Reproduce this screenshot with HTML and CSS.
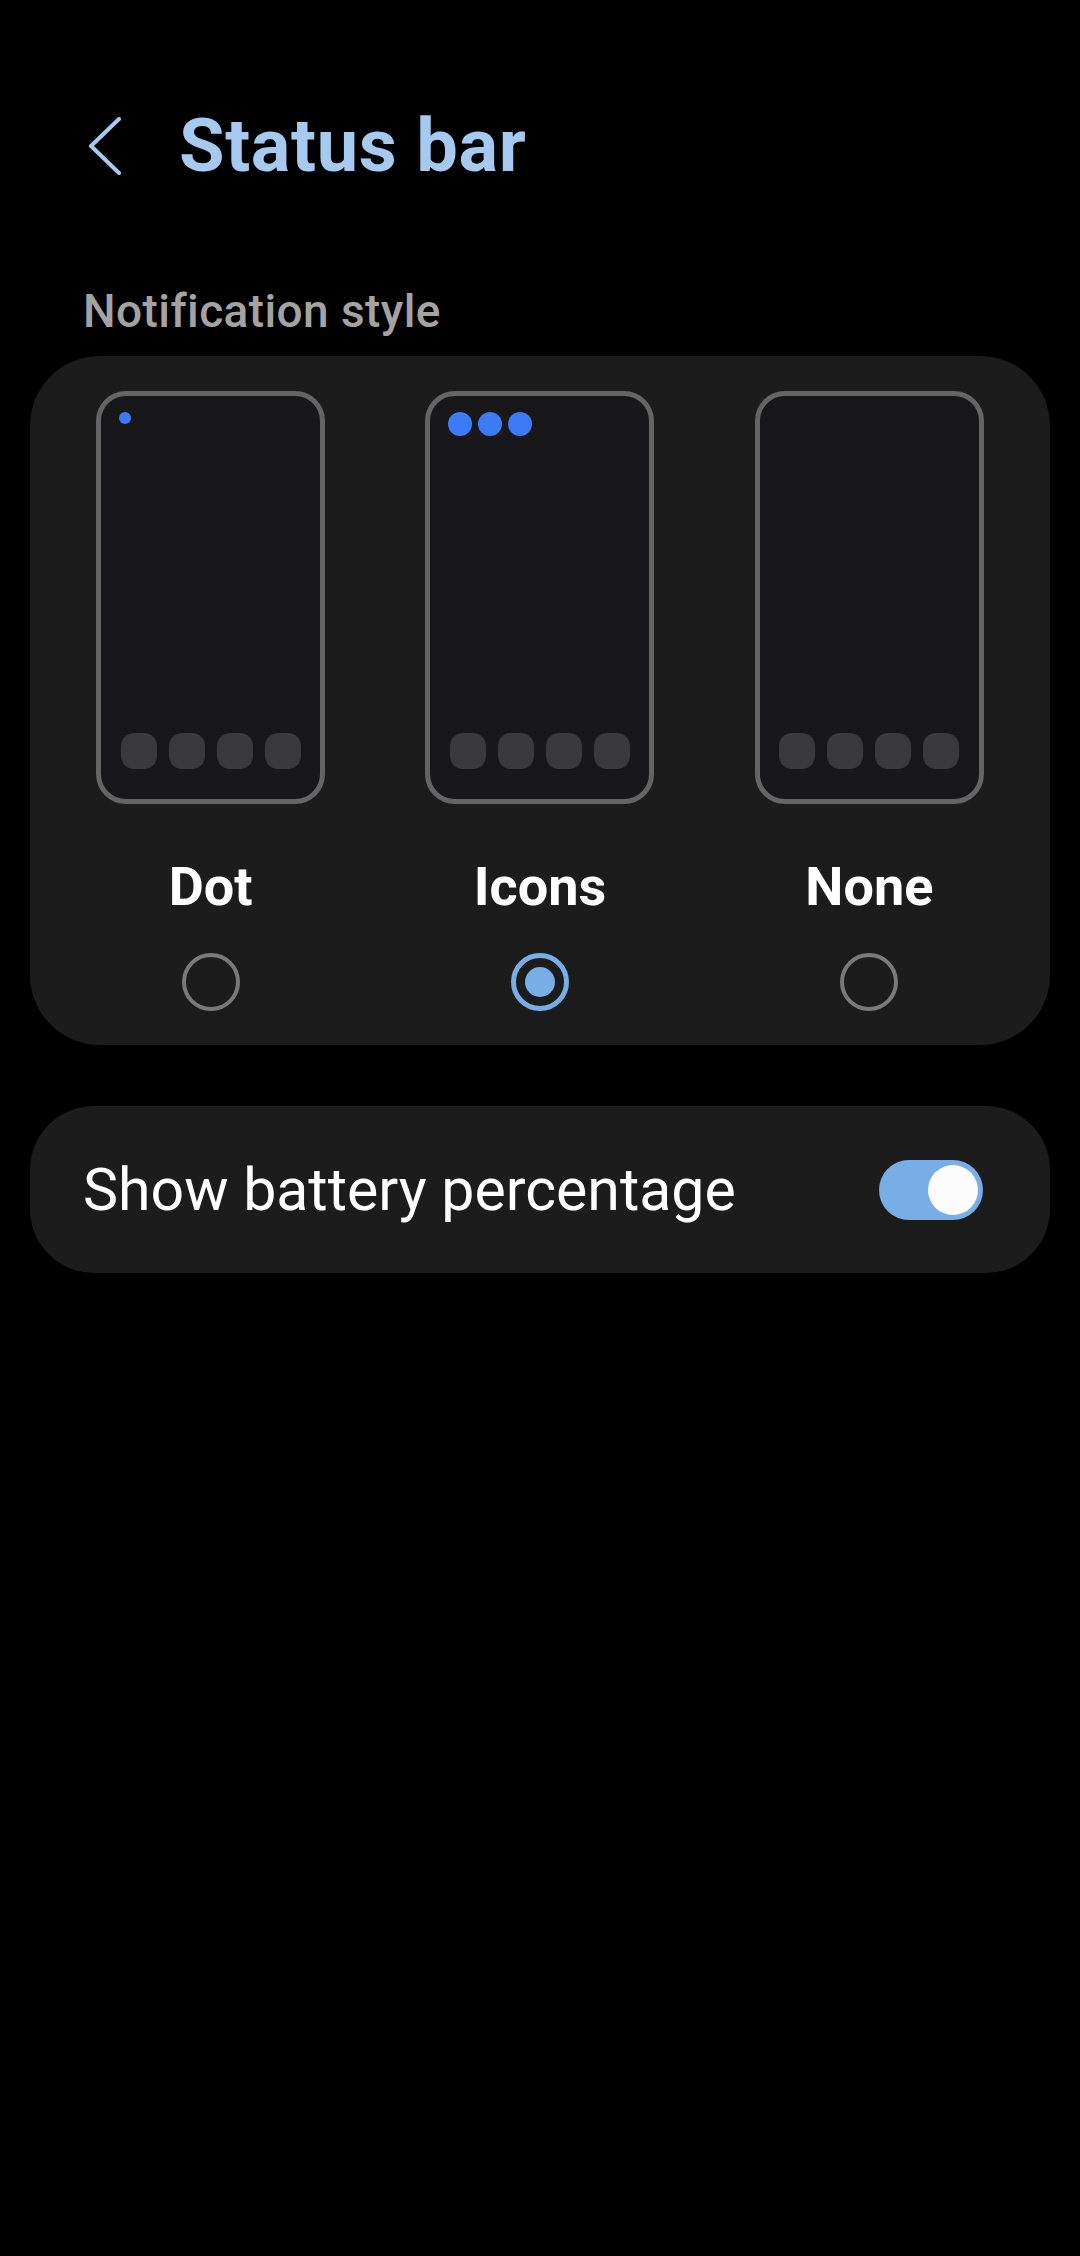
FILE: index.html
```html
<!DOCTYPE html>
<html lang="en">
<head>
    <meta charset="UTF-8">
    <meta name="viewport" content="width=device-width, initial-scale=1.0">
    <title>Status bar</title>
    <link rel="stylesheet" href="styles.css">
</head>
<body>

<!-- Header -->
<div class="header">
    <svg class="back" width="34" height="58" viewBox="0 0 34 58">
        <path d="M31 2 L3 29 L31 56" fill="none" stroke="#a6c9ef" stroke-width="4" stroke-linecap="round" stroke-linejoin="round"/>
    </svg>
    <h1 class="title">Status bar</h1>
</div>

<h2 class="section-label">Notification style</h2>

<!-- Notification style picker -->
<div class="card style-card">
    <div class="option">
        <div class="phone">
            <div class="status-row">
                <span class="dot small"></span>
            </div>
            <div class="dock">
                <span class="app"></span><span class="app"></span><span class="app"></span><span class="app"></span>
            </div>
        </div>
        <div class="option-name">Dot</div>
        <div class="radio"></div>
    </div>
    <div class="option">
        <div class="phone">
            <div class="status-row">
                <span class="dot"></span><span class="dot"></span><span class="dot"></span>
            </div>
            <div class="dock">
                <span class="app"></span><span class="app"></span><span class="app"></span><span class="app"></span>
            </div>
        </div>
        <div class="option-name">Icons</div>
        <div class="radio checked"><span class="radio-fill"></span></div>
    </div>
    <div class="option">
        <div class="phone">
            <div class="status-row"></div>
            <div class="dock">
                <span class="app"></span><span class="app"></span><span class="app"></span><span class="app"></span>
            </div>
        </div>
        <div class="option-name">None</div>
        <div class="radio"></div>
    </div>
</div>

<!-- Battery percentage -->
<div class="card switch-row">
    <span class="switch-label">Show battery percentage</span>
    <div class="toggle on"><span class="thumb"></span></div>
</div>

</body>
</html>
```

FILE: styles.css
```css
body {
    margin: 0;
    background-color: #000;
    font-family: Roboto, "Liberation Sans", sans-serif;
    color: #fff;
    width: 1080px;
}
.header {
    display: flex;
    align-items: center;
    height: 84px;
    padding: 104px 0 0 88px;
}
.back {
    display: block;
}
.title {
    margin: 0 0 0 57px;
    font-size: 74px;
    line-height: 84px;
    font-weight: 700;
    letter-spacing: 0.6px;
    color: #a6c9ef;
}
.section-label {
    margin: 96px 0 0 83px;
    font-size: 46px;
    line-height: 54px;
    font-weight: 500;
    letter-spacing: 0.4px;
    color: #a3a3a3;
}
.card {
    background-color: #1c1c1c;
    margin: 0 30px;
}
.style-card {
    margin-top: 18px;
    border-radius: 70px;
    padding: 35px 16px 34px;
    display: grid;
    grid-template-columns: repeat(3, 1fr);
}
.option {
    display: flex;
    flex-direction: column;
    align-items: center;
}
.phone {
    box-sizing: border-box;
    width: 229px;
    height: 413px;
    border: 5px solid #656565;
    border-radius: 30px;
    background-color: #18181a;
    padding: 16px 18px 30px;
    display: flex;
    flex-direction: column;
    justify-content: space-between;
}
.status-row {
    display: flex;
    gap: 6px;
    height: 24px;
}
.dot {
    width: 24px;
    height: 24px;
    border-radius: 50%;
    background-color: #3b7cf6;
}
.dot.small {
    width: 12px;
    height: 12px;
}
.dock {
    display: flex;
    justify-content: center;
    gap: 12px;
}
.app {
    width: 36px;
    height: 36px;
    border-radius: 13px;
    background-color: #3a3a3c;
}
.option-name {
    margin-top: 51px;
    font-size: 54px;
    line-height: 64px;
    font-weight: 700;
}
.radio {
    box-sizing: border-box;
    margin-top: 34px;
    width: 58px;
    height: 58px;
    border: 4px solid #7a7a7a;
    border-radius: 50%;
    display: flex;
    align-items: center;
    justify-content: center;
}
.radio.checked {
    border: 5px solid #78aee6;
}
.radio-fill {
    width: 30px;
    height: 30px;
    border-radius: 50%;
    background-color: #78aee6;
}
.switch-row {
    margin-top: 61px;
    height: 167px;
    border-radius: 64px;
    padding: 0 67px 0 53px;
    display: flex;
    align-items: center;
    justify-content: space-between;
}
.switch-label {
    font-size: 59px;
    line-height: 68px;
}
.toggle {
    box-sizing: border-box;
    width: 104px;
    height: 60px;
    border-radius: 30px;
    padding: 5px;
    background-color: #78aee6;
    display: flex;
    justify-content: flex-end;
}
.thumb {
    width: 50px;
    height: 50px;
    border-radius: 50%;
    background-color: #fcfcfc;
}
```
